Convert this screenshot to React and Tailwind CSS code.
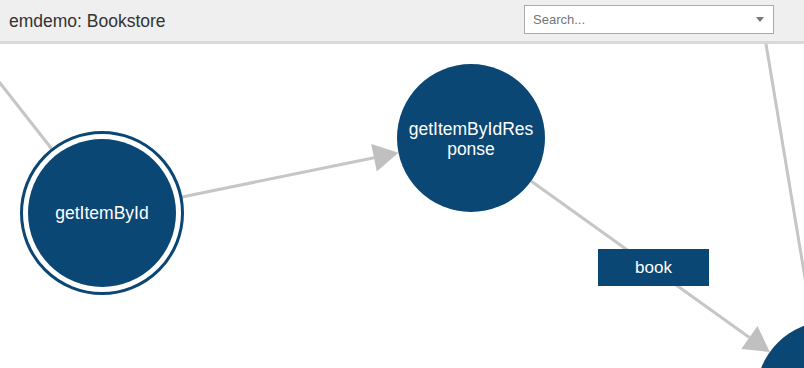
const EDGE = '#c6c6c6'

// page coords; canvas starts at y=44 (below header)
const EDGES = [
  { from: [-20, 57.5], to: [51.4, 148.5] },
  { from: [182, 197], to: [374, 157.7], head: '398.5,152.7 376.8,171.4 371.2,144' },
  { from: [531, 181], to: [749.4, 337.5], head: '769.8,352 741.3,348.9 757.5,326.1' },
  { from: [765.5, 41], to: [812, 320] },
]

export default function App() {
  return (
    <div className="w-[804px] h-[368px] overflow-hidden bg-white" style={{ fontFamily: '"Liberation Sans", Arial, sans-serif' }}>
      {/* Header */}
      <header className="h-[44px] flex items-center justify-between pl-[9px] pr-[30px] bg-[#efefef] border-b-[3px] border-[#d9d9d9]">
        <h1 className="text-[17.5px] text-[#333] leading-none mt-[2px]">emdemo: Bookstore</h1>
        <div className="w-[250px] h-[29px] -mt-[2px] flex items-center justify-between bg-white border border-[#aaaaaa] pl-[8px] pr-[9px]">
          <span className="text-[13px] text-[#757575]">Search...</span>
          <span className="w-0 h-0 border-l-[4.5px] border-r-[4.5px] border-t-[5px] border-l-transparent border-r-transparent border-t-[#777]" />
        </div>
      </header>

      {/* Graph canvas */}
      <div className="relative h-[324px] overflow-hidden">
        <svg className="absolute inset-0" width="804" height="324" viewBox="0 44 804 324">
          {EDGES.map((e, i) => (
            <g key={i}>
              <line x1={e.from[0]} y1={e.from[1]} x2={e.to[0]} y2={e.to[1]} stroke={EDGE} strokeWidth="3" />
              {e.head && <polygon points={e.head} fill="#c0c0c0" />}
            </g>
          ))}
        </svg>

        {/* getItemById - start node with ring */}
        <div className="absolute left-[20px] top-[87px] w-[164px] h-[164px] rounded-full border-[3px] border-[#0a4774] p-[5px] bg-white">
          <div className="w-[148px] h-[148px] rounded-full bg-[#0a4774] flex items-center justify-center text-white text-[17.5px]">
            getItemById
          </div>
        </div>

        <div className="absolute left-[397px] top-[20px] w-[148px] h-[148px] rounded-full bg-[#0a4774] flex items-center justify-center text-center text-white text-[17.5px] leading-[20px]">
          <span className="mt-[1px]">getItemByIdRes<br />ponse</span>
        </div>

        <div className="absolute left-[756px] top-[277px] w-[148px] h-[148px] rounded-full bg-[#0a4774]" />

        {/* edge label */}
        <div className="absolute left-[598px] top-[205px] w-[111px] h-[37px] bg-[#0a4774] flex items-center justify-center text-white text-[17px]">
          book
        </div>
      </div>
    </div>
  )
}
